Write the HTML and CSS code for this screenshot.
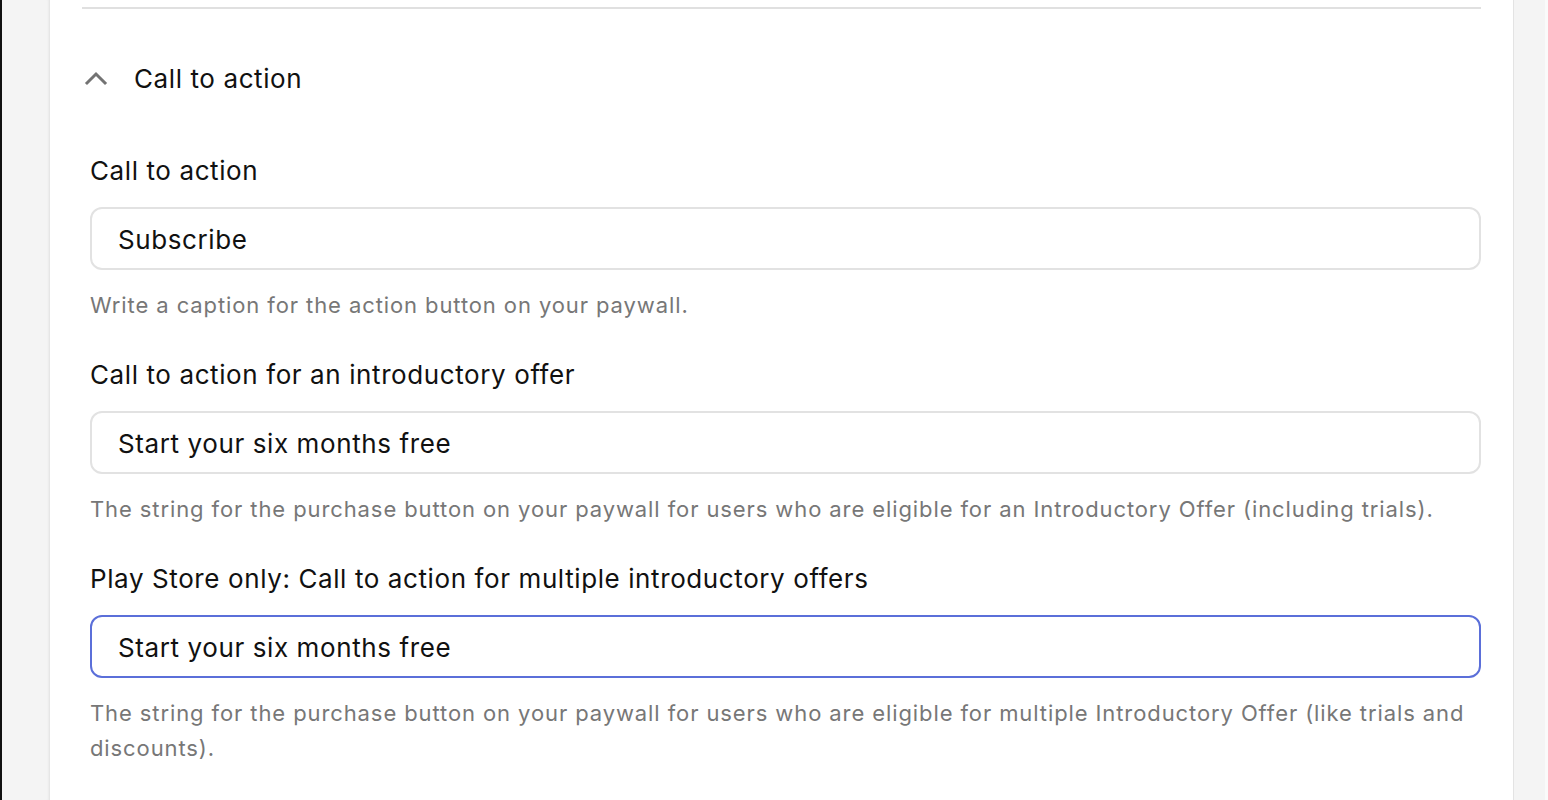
FILE: index.html
```html
<!DOCTYPE html>
<html>
<head>
<meta charset="utf-8">
<link rel="stylesheet" href="styles.css">
</head>
<body>
<div class="page">
  <div class="edge-left"></div>
  <div class="gutter-left"></div>
  <main class="panel">
    <div class="divider"></div>
    <div class="section-head">
      <svg class="chev" width="24" height="16" viewBox="0 0 24 16"><path d="M3 13 L12 4 L21 13" fill="none" stroke="#737373" stroke-width="3" stroke-linecap="square" stroke-linejoin="miter"/></svg>
      <span class="section-title">Call to action</span>
    </div>
    <div class="fields">
      <div class="field">
        <label class="label">Call to action</label>
        <div class="input">Subscribe</div>
        <p class="help">Write a caption for the action button on your paywall.</p>
      </div>
      <div class="field">
        <label class="label">Call to action for an introductory offer</label>
        <div class="input">Start your six months free</div>
        <p class="help">The string for the purchase button on your paywall for users who are eligible for an Introductory Offer (including trials).</p>
      </div>
      <div class="field">
        <label class="label">Play Store only: Call to action for multiple introductory offers</label>
        <div class="input focused">Start your six months free</div>
        <p class="help">The string for the purchase button on your paywall for users who are eligible for multiple Introductory Offer (like trials and discounts).</p>
      </div>
    </div>
  </main>
  <div class="gutter-right"></div>
  <div class="edge-right"></div>
</div>
</body>
</html>
```
FILE: styles.css
```css
* { box-sizing: border-box; }
html, body { margin: 0; padding: 0; height: 100%; overflow: hidden; }
body { font-family: Inter, "Noto Sans", "Liberation Sans", sans-serif; color: #111; background: #f4f4f4; }
.page { display: flex; height: 800px; }
.edge-left { width: 2px; background: #111; flex: none; }
.gutter-left { width: 47px; background: #f4f4f4; flex: none; box-shadow: inset -2px 0 3px -2px rgba(0,0,0,0.08); }
.panel { width: 1465px; flex: none; background: #fff; border-left: 1px solid #e6e6e6; border-right: 1px solid #e3e3e3; padding: 7px 32px 0 32px; }
.gutter-right { width: 31px; flex: none; background: #f4f4f4; }
.edge-right { width: 3px; flex: none; background: #fafafa; }
.divider { height: 2px; background: #e0e0e0; }
.section-head { display: flex; height: 140px; align-items: flex-start; padding-top: 56px; }
.chev { margin-left: 2px; margin-right: 26px; margin-top: 5px; }
.section-title { font-size: 26px; line-height: 28px; letter-spacing: 0.6px; }
.fields { padding-left: 8px; margin-top: 5px; }
.field { display: flex; flex-direction: column; }
.label { font-size: 26px; line-height: 32px; letter-spacing: 0.6px; padding-top: 1px; }
.input { margin-top: 20px; height: 63px; border: 2px solid #e2e2e2; border-radius: 12px; padding: 2px 26px 0; font-size: 26px; display: flex; align-items: center; letter-spacing: 0.6px; }
.input.focused { border-color: #5b6fd9; }
.help { margin: 18px 0 35px; font-size: 22px; line-height: 35px; color: #777; letter-spacing: 0.9px; }
```
